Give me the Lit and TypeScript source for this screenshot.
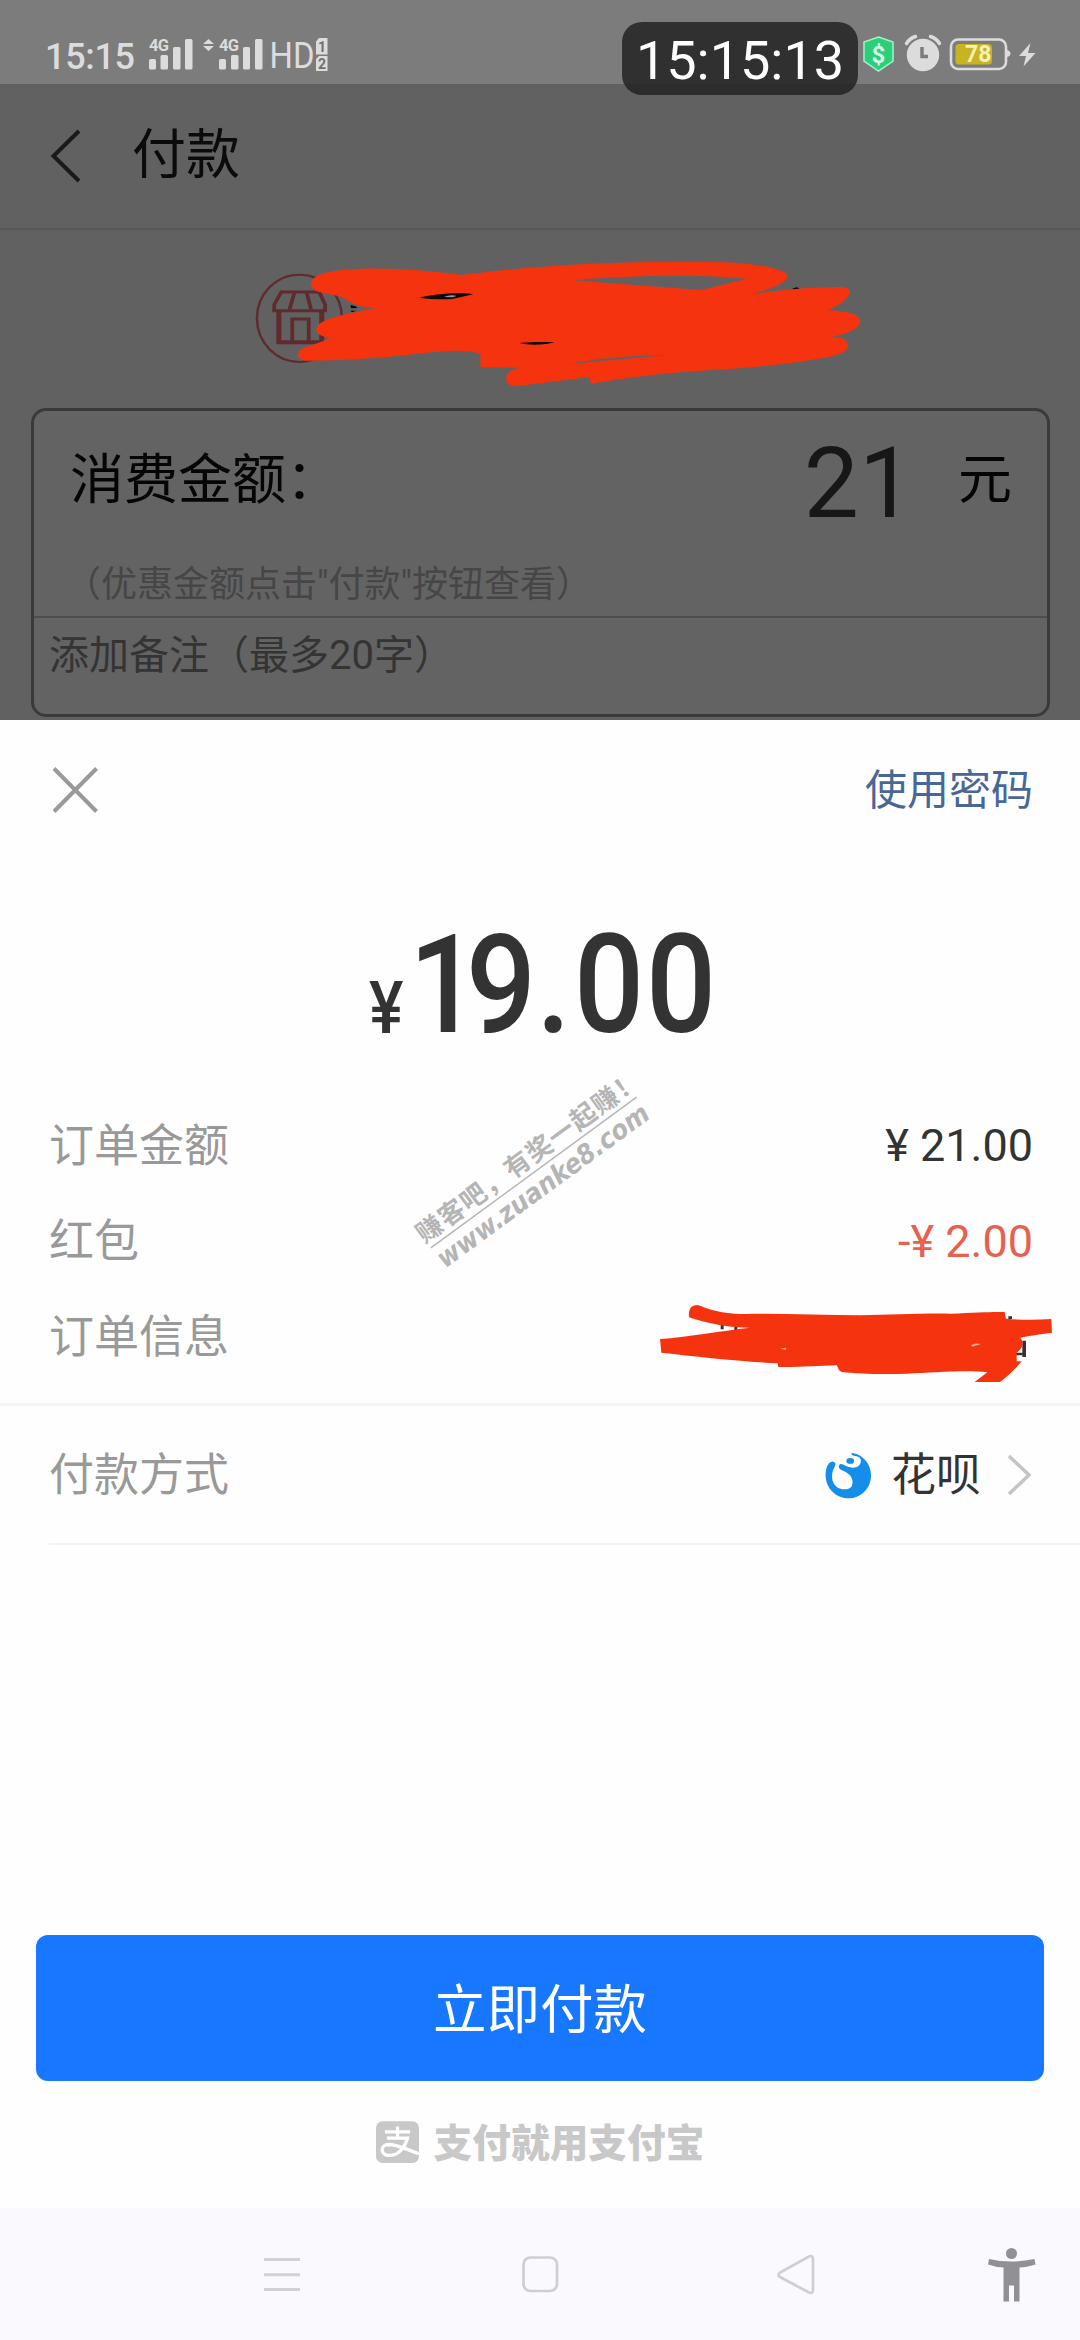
import { LitElement, html, css } from "lit";
import { customElement } from "lit/decorators.js";

@customElement("status-bar")
class StatusBar extends LitElement {
  static styles = css`
    :host { display: block; }
    .bar { position: relative; height: 84px; background: #7c7c7c; }
    .art { display: block; width: 1080px; height: 84px; }
    .time { font: 500 36px Roboto, sans-serif; fill: #dcdcdc; }
    .hd { font: 400 36px Roboto, sans-serif; fill: #dcdcdc; }
    .net { font: 700 16.5px Roboto, sans-serif; fill: #dcdcdc; }
    .sim { font: 700 14px Roboto, sans-serif; fill: #707070; }
    .pct { font: 700 23px Roboto, sans-serif; fill: #f6f0b4; }
    .coin { font: 700 24px Roboto, sans-serif; fill: #d9f7e6; }
    .clock {
      position: absolute; left: 622px; top: 22px; width: 236px; height: 73px;
      border-radius: 20px; background: rgba(35, 35, 35, 0.85); color: #fff;
      font: 400 54px/77px Roboto, sans-serif; text-align: center; z-index: 2;
    }
  `;
  render() {
    return html`<div class="bar">
      <svg class="art" viewBox="0 0 1080 84">
        <text class="time" x="45" y="68.5" textLength="90">15:15</text>
        <text class="net" x="149" y="51" textLength="20">4G</text>
        <g fill="#dcdcdc">
          <rect x="149" y="59" width="7" height="10.5" rx="1.5" /><rect x="160.5" y="55" width="7.5" height="14.5" rx="1.5" />
          <rect x="173" y="47" width="7.5" height="22.5" rx="1.5" /><rect x="185" y="39" width="7.5" height="30.5" rx="1.5" />
          <path d="M208.500 39l5.500 5h-11zM208.500 51l5.500-5h-11z" />
          <rect x="219" y="59" width="7" height="10.5" rx="1.5" /><rect x="231" y="55" width="7.500" height="14.500" rx="1.5" />
          <rect x="243" y="47" width="7" height="22.500" rx="1.5" /><rect x="255" y="39" width="7.500" height="30.500" rx="1.5" />
          <path d="M319 38h8.500v16.500h-11.500v-13zM319 56h8.500v15h-11.500v-12z" />
        </g>
        <text class="net" x="219" y="51" textLength="20">4G</text>
        <text class="hd" x="269.500" y="67.500" textLength="45" lengthAdjust="spacingAndGlyphs">HD</text>
        <text class="sim" x="318" y="51.500">1</text>
        <text class="sim" x="318" y="68.500">2</text>
        <path d="M878.500 37l14.500 5v19l-14.500 10-14.500-10v-19z" fill="#29cf7b" stroke="#a9efc9" stroke-width="1.500" />
        <text class="coin" x="871.600" y="62.500">$</text>
        <circle cx="923" cy="55" r="16.200" fill="#dcdcdc" />
        <path d="M906.500 43.500q3-5 9-7M939.500 43.500q-3-5-9-7" stroke="#dcdcdc" stroke-width="3.500" fill="none" stroke-linecap="round" />
        <path d="M922 47v9.500h6" stroke="#7c7c7c" stroke-width="3.500" fill="none" />
        <rect x="951" y="39.500" width="55" height="29.500" rx="7" fill="none" stroke="#dcdcdc" stroke-width="2.600" />
        <path d="M1007 50q3.500 1 3.500 3.500t-3.500 3.500z" fill="#dcdcdc" />
        <rect x="955.500" y="44" width="36.500" height="20.500" rx="3.500" fill="#c8b320" />
        <text class="pct" x="965" y="62.300">78</text>
        <path d="M1030.500 43l-11.500 13h7l-2.500 10.500 12-13.500h-7.500z" fill="#dcdcdc" />
      </svg>
      <div class="clock">15:15:13</div>
    </div>`;
  }
}

@customElement("merchant-page")
class MerchantPage extends LitElement {
  static styles = css`
    :host { display: block; background: #616161; height: 636px; overflow: hidden; font-family: Roboto, "Noto Sans CJK SC", sans-serif; }
    .head { box-sizing: border-box; height: 146px; display: flex; align-items: center; padding: 0 0 1px 50px; border-bottom: 2px solid #585858; gap: 50px; }
    .back { width: 32px; height: 54px; }
    .title { font-size: 54px; line-height: 70px; color: #0b0b0b; }
    .shop { height: 178px; padding: 10px 0 0 230px; box-sizing: border-box; }
    .shop svg { display: block; width: 660px; height: 160px; }
    .card { margin: 0 30px 0 31px; box-sizing: border-box; height: 309px; border: 3px solid #3a3a3a; border-radius: 15px; background: #636363; }
    .sum { height: 144px; display: flex; align-items: center; padding: 0 35px 0 36px; color: #050505; font-size: 54px; }
    .name { flex: 1; padding-bottom: 15px; }
    .unit { padding-bottom: 15px; }
    .value { font-size: 98px; color: #171717; margin-right: 44px; }
    .hint { height: 61px; line-height: 61px; padding-left: 31px; font-size: 36px; color: #464646; border-bottom: 2px solid #4e4e4e; }
    .note { height: 76px; line-height: 76px; padding-left: 15px; font-size: 40px; color: #343434; }
  `;
  render() {
    return html`
      <div class="head">
        <svg class="back" viewBox="0 0 32 54"><path d="M29 2L3.500 27 29 52" fill="none" stroke="#1a1a1a" stroke-width="4" /></svg>
        <div class="title">付款</div>
      </div>
      <div class="shop">
        <svg viewBox="0 0 1568 480" preserveAspectRatio="none">
          <g fill="none" stroke="#5f2b2f">
            <ellipse cx="165" cy="235" rx="101" ry="131" stroke-width="6" />
            <path d="M122 156h90l14 38v18h-121v-18zM153 158l-12 52M182 158l11 52" stroke-width="9" />
            <path d="M116 212v95h102v-95" stroke-width="12" />
            <path d="M148 307v-70h39v70" stroke-width="9" />
          </g>
          <path d="M286 195l12 4 5 5-15 1zM286 212l14 0-10 5zM1335 147l10-5 9 3-9 4z" fill="#050505" />
          <path fill="#f5340f" fill-rule="evenodd" d="M192 132C194 100 240 92 300 87C390 82 480 94 552 105C640 90 760 76 860 71C980 64 1130 63 1200 68C1270 74 1325 92 1324 108C1323 132 1280 148 1236 163C1290 153 1370 141 1440 141C1475 140 1476 151 1470 165C1462 185 1443 198 1418 211C1460 212 1497 222 1497 243C1495 268 1465 283 1424 291C1455 291 1469 299 1468 316C1467 343 1430 351 1380 360C1310 374 1210 388 1120 392C1040 397 940 413 857 431L855 411C790 420 730 432 675 439C658 434 654 424 657 409C660 394 672 387 690 383L595 381V341C560 326 500 332 440 342C370 354 260 362 180 362C162 359 158 342 166 329C180 318 215 310 238 293C212 290 202 279 206 262C214 238 270 222 345 205C315 202 292 195 270 173C240 158 195 164 192 132ZM815 121L1118 150L1228 116C1130 103 950 104 815 121ZM805 372L1035 346C960 344 850 360 805 372Z" />
          <path d="M451 173C475 163 550 155 578 163L528 177C500 179 470 177 451 173ZM688 309C712 305 748 306 770 306C750 316 708 316 688 309Z" fill="#100b0b" />
          <path d="M508 171q16-9 30-3l-9 4z" fill="#999" />
        </svg>
      </div>
      <div class="card">
        <div class="sum"><div class="name">消费金额：</div><div class="value">21</div><div class="unit">元</div></div>
        <div class="hint">（优惠金额点击"付款"按钮查看）</div>
        <div class="note">添加备注（最多20字）</div>
      </div>`;
  }
}

@customElement("pay-sheet")
class PaySheet extends LitElement {
  static styles = css`
    :host { display: block; position: relative; height: 1488px; background: #fefefe; font-family: Roboto, "Noto Sans CJK SC", sans-serif; }
    .top { height: 140px; display: flex; align-items: center; justify-content: space-between; padding: 0 47px 0 52px; }
    .close { width: 46px; height: 48px; }
    .pwd { font-size: 42px; color: #496796; padding-bottom: 7px; }
    .amount { display: block; width: 1080px; height: 238px; fill: #333; }
    .yen { font: 500 72px Roboto, sans-serif; }
    .digits { font: 500 137px Roboto, sans-serif; }
    .row { height: 95.500px; display: flex; align-items: center; justify-content: space-between; padding: 0 47px 0 49px; font-size: 45px; color: #999; }
    .label { padding-bottom: 7px; }
    .money { font-size: 45px; color: #333; }
    .red { color: #e8604f; }
    .info { height: 117px; border-bottom: 3px solid #f5f5f5; box-sizing: border-box; padding-bottom: 18px; }
    .method { height: 137px; }
    .choice { display: flex; align-items: center; color: #333; }
    .logo { width: 48px; height: 48px; margin-right: 19px; }
    .arrow { width: 26px; height: 42px; margin-left: 26px; }
    .rule { height: 2px; margin-left: 49px; background: #f3f3f3; }
    .pay { margin: 390px 36px 0; box-sizing: border-box; height: 146px; padding-bottom: 5px; border-radius: 12px; background: #1777ff; color: #fff; display: flex; align-items: center; justify-content: center; font-size: 53.500px; }
    .brand { display: flex; align-items: center; justify-content: center; height: 122px; gap: 15px; color: #c8c8c8; font-size: 38.700px; font-weight: 900; }
    .slogan { padding-bottom: 5px; }
    .mark { width: 43px; height: 43px; }
    .scribble { position: absolute; left: 640px; top: 380px; width: 440px; height: 460px; }
    .wm { position: absolute; left: 340px; top: 330px; width: 400px; height: 250px; }
    .wcn { font: 700 26px "Noto Sans CJK SC", sans-serif; }
    .bang { font-family: "Noto Sans CJK TC", sans-serif; }
    .wen { font: italic 700 27px "DejaVu Sans", sans-serif; }
  `;
  render() {
    return html`
      <div class="top">
        <svg class="close" viewBox="0 0 46 48"><path d="M2 2.500L44.500 45.500M44.500 2.500L2 45.500" stroke="#999" stroke-width="4" /></svg>
        <div class="pwd">使用密码</div>
      </div>
      <svg class="amount" viewBox="0 860 1080 238">
        <g transform="scale(0.9 1)">
          <text class="yen" x="410" y="1033">¥</text>
          <text class="digits" x="454.400 517.800 596 637.800 717.800" y="1032">19.00</text>
        </g>
      </svg>
      <div class="row"><span class="label">订单金额</span><span class="money">¥ 21.00</span></div>
      <div class="row"><span class="label">红包</span><span class="money red">-¥ 2.00</span></div>
      <div class="row info"><span class="label">订单信息</span></div>
      <div class="row method">
        <span class="label">付款方式</span>
        <span class="choice">
          <svg class="logo" viewBox="552 1046 148 150">
            <path fill="#158ee9" d="M640 1052C675 1058 699 1089 698 1124C697 1164 665 1194 627 1194C588 1194 556 1162 556 1122C556 1100 563 1080 578 1079C588 1080 589 1090 583 1098C571 1119 575 1147 592 1159C607 1169 632 1168 638 1155C645 1137 637 1116 605 1105C596 1101 594 1090 603 1087C610 1085 621 1097 640 1098C658 1098 668 1087 666 1073C663 1061 651 1063 640 1059C635 1056 636 1053 640 1052Z" />
            <ellipse cx="633" cy="1077" rx="12" ry="9" fill="#158ee9" />
          </svg>
          <span class="label">花呗</span>
          <svg class="arrow" viewBox="0 0 26 42"><path d="M2 2L22 21 2 40" fill="none" stroke="#c4c4c4" stroke-width="3.500" /></svg>
        </span>
      </div>
      <div class="rule"></div>
      <div class="pay">立即付款</div>
      <div class="brand">
        <svg class="mark" viewBox="0 0 130 128">
          <rect width="130" height="126" rx="20" fill="#c8c8c8" />
          <path d="M27 32h76M65 16v34M33 51h62C88 76 70 104 38 103C12 101 12 71 38 70C66 70 94 86 130 98" fill="none" stroke="#fefefe" stroke-width="10" />
        </svg>
        <span class="slogan">支付就用支付宝</span>
      </div>
      <svg class="wm" viewBox="0 150 400 250" fill="#b5b5b5">
        <g transform="translate(91 348) rotate(-36.200)">
          <text class="wcn" x="-3" y="-7" textLength="271">赚客吧，有奖一起赚<tspan class="bang">！</tspan></text>
          <rect x="0" y="-1" width="255" height="1.500" />
          <text class="wen" x="-1" y="25" textLength="256" lengthAdjust="spacingAndGlyphs">www.zuanke8.com</text>
        </g>
      </svg>
      <svg class="scribble" viewBox="0 0 1320 1380">
        <path d="M242 675h9v13h-9zM283 680h9v10h-9zM1105 649h11v8h-11zM1147 722h11v49h-11zM1125 758h28v8h-28z" fill="#333" />
        <path fill="#f5340f" d="M147 652C145 628 152 615 172 615C190 619 230 643 320 642C430 640 550 646 660 646C750 645 830 640 930 641C1010 638 1050 635 1094 636L1098 656C1140 660 1190 660 1234 657L1236 698C1205 702 1170 707 1141 713C1153 727 1151 742 1130 758V784H1145C1125 807 1104 829 1080 846H1004L1042 817C980 809 880 818 800 821C730 824 650 821 605 816C596 812 593 803 591 796L455 801H415L413 790C300 784 170 770 64 758L60 717C140 711 240 693 330 683C260 684 195 668 147 652Z" />
        <path d="M994 735q14-7 29-3-14 5-27 8zM420 746l17-3 2 7z" fill="#ffab98" />
      </svg>`;
  }
}

@customElement("nav-bar")
class NavBar extends LitElement {
  static styles = css`
    :host { display: block; height: 132px; background: #f9f9fe; }
    .nav { display: block; width: 1080px; height: 132px; }
  `;
  render() {
    return html`<svg class="nav" viewBox="0 2208 1080 132">
      <path d="M264 2259.500h36M264 2274.700h36M264 2289.500h36" stroke="#d1d0d6" stroke-width="3" />
      <rect x="523.500" y="2257.500" width="33.500" height="33.500" rx="7" fill="none" stroke="#cfced3" stroke-width="2.700" />
      <path d="M809 2256.500L780 2272.500Q777 2275 780 2277L809 2292.500Q813 2294 813 2290V2259Q813 2255 809 2256.500Z" fill="none" stroke="#cfced3" stroke-width="2.700" />
      <g fill="#919095">
        <ellipse cx="1011.500" cy="2253.500" rx="5.500" ry="5.500" />
        <path d="M989 2259Q1011 2264 1034.500 2259L1035.500 2264.500Q1028 2267 1019.500 2267.500V2301.500H1014V2285.500H1009V2301.500H1003.500V2267.500Q995 2267 988 2264.500Z" />
      </g>
    </svg>`;
  }
}

@customElement("app-root")
class AppRoot extends LitElement {
  static styles = css`
    :host { display: block; width: 1080px; height: 2340px; overflow: hidden; background: #fefefe; }
  `;
  render() {
    return html`<status-bar lang="zh-CN"></status-bar><merchant-page lang="zh-CN"></merchant-page><pay-sheet lang="zh-CN"></pay-sheet><nav-bar></nav-bar>`;
  }
}
